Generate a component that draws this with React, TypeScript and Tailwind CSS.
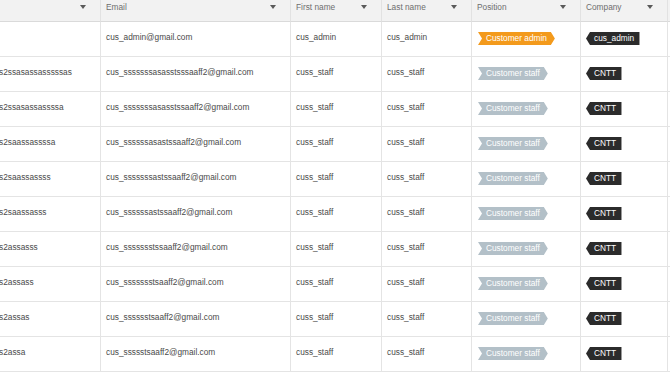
type Row = {
  name: string;
  email: string;
  first: string;
  last: string;
  admin: boolean;
  company: string;
};

const rows: Row[] = [
  { name: "", email: "cus_admin@gmail.com", first: "cus_admin", last: "cus_admin", admin: true, company: "cus_admin" },
  { name: "s2ssasassasssssas", email: "cus_sssssssasasstsssaaff2@gmail.com", first: "cuss_staff", last: "cuss_staff", admin: false, company: "CNTT" },
  { name: "s2ssasassassssa", email: "cus_sssssssasasstssaaff2@gmail.com", first: "cuss_staff", last: "cuss_staff", admin: false, company: "CNTT" },
  { name: "s2saassassssa", email: "cus_ssssssasastssaaff2@gmail.com", first: "cuss_staff", last: "cuss_staff", admin: false, company: "CNTT" },
  { name: "s2saassassss", email: "cus_sssssssastssaaff2@gmail.com", first: "cuss_staff", last: "cuss_staff", admin: false, company: "CNTT" },
  { name: "s2saassasss", email: "cus_ssssssastssaaff2@gmail.com", first: "cuss_staff", last: "cuss_staff", admin: false, company: "CNTT" },
  { name: "s2assasss", email: "cus_ssssssstssaaff2@gmail.com", first: "cuss_staff", last: "cuss_staff", admin: false, company: "CNTT" },
  { name: "s2assass", email: "cus_ssssssstsaaff2@gmail.com", first: "cuss_staff", last: "cuss_staff", admin: false, company: "CNTT" },
  { name: "s2assas", email: "cus_sssssstsaaff2@gmail.com", first: "cuss_staff", last: "cuss_staff", admin: false, company: "CNTT" },
  { name: "s2assa", email: "cus_ssssstsaaff2@gmail.com", first: "cuss_staff", last: "cuss_staff", admin: false, company: "CNTT" },
];

const headers = ["", "Email", "First name", "Last name", "Position", "Company"];

const Arrow = () => (
  <span className="w-0 h-0 border-l-[3.5px] border-r-[3.5px] border-t-[4px] border-l-transparent border-r-transparent border-t-[#5a5a5a]" />
);

const PositionBadge = ({ admin }: { admin: boolean }) => (
  <span
    className={`inline-block h-[13px] leading-[13px] px-[8px] text-white whitespace-nowrap [clip-path:polygon(0_0,calc(100%_-_4px)_0,100%_50%,calc(100%_-_4px)_100%,0_100%,4px_50%)] ${
      admin ? "bg-[#f39a1c]" : "bg-[#b3c0c8]"
    }`}
  >
    {admin ? "Customer admin" : "Customer staff"}
  </span>
);

const CompanyBadge = ({ name }: { name: string }) => (
  <span className="inline-block h-[13px] leading-[13px] pl-[8px] pr-[5px] bg-[#2b2b2b] text-white whitespace-nowrap border-r border-r-[#9a9a9a] [clip-path:polygon(4px_0,100%_0,100%_100%,4px_100%,0_50%)]">
    {name}
  </span>
);

const cell = "h-[35px] border-b border-r border-[#e4e4e4] pt-[10px] pl-[5px] leading-[10px] whitespace-nowrap overflow-hidden";

export default function App() {
  return (
    <div className="w-[670px] h-[377px] overflow-hidden bg-white text-[8.3px] text-[#4a4a4a] font-['Liberation_Sans',Arial,sans-serif]">
      <div className="grid grid-cols-[101px_190px_91px_90px_109px_87px_1fr]">
        {headers.map((h, i) => (
          <div
            key={i}
            className="h-[22px] bg-[#f2f2f2] border-b border-r border-b-[#dadada] border-r-[#e2e2e2] flex items-start justify-between pl-[5px] pr-[14px] pt-[2px] leading-[10px] text-[#6e6e6e]"
          >
            <span>{h}</span>
            <span className="pt-[3px] flex">
              <Arrow />
            </span>
          </div>
        ))}
        <div className="h-[22px] bg-[#f2f2f2] border-b border-b-[#dadada]" />
        {rows.map((r, i) => (
          <div key={i} className="contents">
            <div className={`${cell} !pl-0`}>
              <span className="block -ml-[1px]">{r.name}</span>
            </div>
            <div className={cell}>{r.email}</div>
            <div className={cell}>{r.first}</div>
            <div className={cell}>{r.last}</div>
            <div className={`${cell} !pt-[10px] !pl-[6px]`}>
              <PositionBadge admin={r.admin} />
            </div>
            <div className={`${cell} !pl-[5px]`}>
              <CompanyBadge name={r.company} />
            </div>
            <div className="h-[35px] border-b border-[#e4e4e4]" />
          </div>
        ))}
      </div>
    </div>
  );
}
